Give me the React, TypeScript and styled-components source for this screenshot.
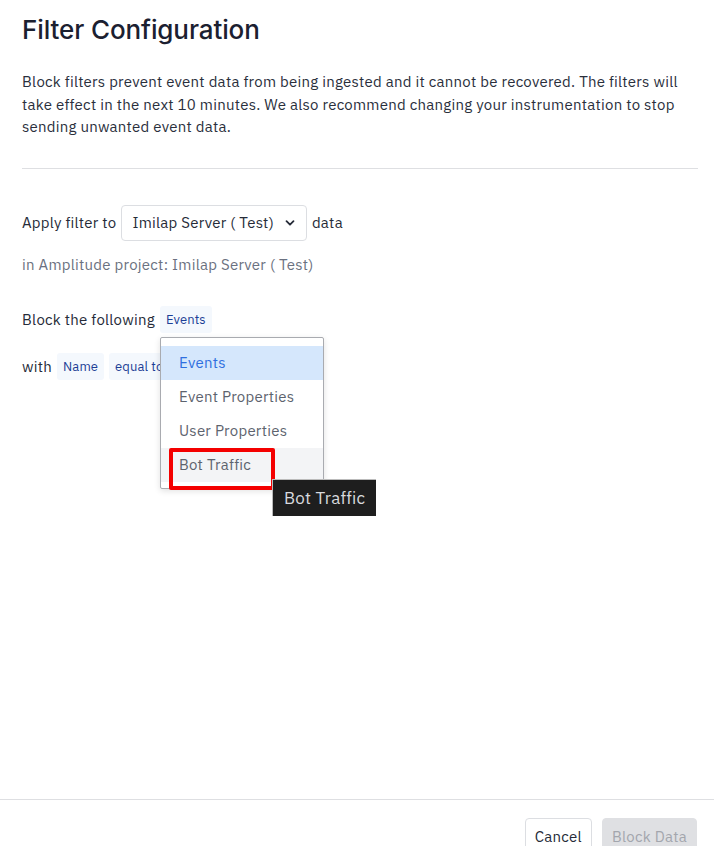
import React from "react";
import styled, { createGlobalStyle } from "styled-components";

const Global = createGlobalStyle`
  html, body { margin: 0; padding: 0; background: #fff; }
  body { font-family: "IBM Plex Sans", "Noto Sans", "Open Sans", sans-serif; color: #262b38; letter-spacing: 0.25px; }
  * { box-sizing: border-box; }
`;

const Page = styled.div`
  width: 714px;
  height: 846px;
  display: flex;
  flex-direction: column;
  overflow: hidden;
`;

const Content = styled.div`
  flex: 1;
  padding: 14px 16px 0 22px;
  display: flex;
  flex-direction: column;
`;

const Title = styled.h1`
  margin: 0;
  font-family: "Inter", "Noto Sans", sans-serif;
  font-weight: 500;
  font-size: 26px;
  line-height: 32px;
  color: #1b2030;
  letter-spacing: -0.1px;
`;

const Intro = styled.p`
  margin: 25px 0 0;
  font-size: 15px;
  line-height: 22.5px;
  color: #2a2f3c;
  padding-right: 8px;
`;

const Divider = styled.hr`
  margin: 29px 0 0;
  border: 0;
  border-top: 1px solid #dedfe2;
  height: 0;
`;

const Row = styled.div<{ $mt: number }>`
  margin-top: ${(p) => p.$mt}px;
  display: flex;
  align-items: center;
  gap: 5px;
  font-size: 15px;
  color: #262b38;
  position: relative;
`;

const Select = styled.div`
  display: flex;
  align-items: center;
  gap: 10px;
  height: 36px;
  padding: 0 10px 0 10px;
  border: 1px solid #dcdee2;
  border-radius: 4px;
  font-size: 15px;
  color: #262b38;
`;

const Muted = styled.div`
  margin-top: 13px;
  font-size: 15px;
  line-height: 22px;
  color: #6b7180;
`;

const Pill = styled.span`
  display: inline-flex;
  align-items: center;
  height: 27px;
  padding: 0 6px;
  border-radius: 3px;
  background: #f4f8fd;
  color: #1c3f96;
  font-size: 13px;
  letter-spacing: 0.1px;
`;

const PillAnchor = styled.span`
  position: relative;
  display: inline-flex;
`;

const Menu = styled.div`
  position: absolute;
  left: 0;
  top: 31px;
  width: 164px;
  padding: 8px 0 6px;
  background: #fff;
  border: 1px solid #a9abb0;
  border-radius: 2px;
  box-shadow: 0 2px 6px rgba(0, 0, 0, 0.12);
  z-index: 5;
`;

const Item = styled.div<{ $active?: boolean; $hover?: boolean }>`
  height: 34px;
  display: flex;
  align-items: center;
  padding-left: 18px;
  font-size: 15px;
  white-space: nowrap;
  color: ${(p) => (p.$active ? "#2f6fdf" : "#5d636e")};
  background: ${(p) => (p.$active ? "#d5e7fc" : p.$hover ? "#f3f4f6" : "transparent")};
`;

const Highlight = styled.div`
  position: absolute;
  left: 8px;
  top: 110px;
  width: 106px;
  height: 42px;
  border: 4px solid #f40000;
  border-radius: 2px;
`;

const Tooltip = styled.div`
  position: absolute;
  left: 111px;
  top: 141px;
  height: 37px;
  padding: 0 11px;
  display: flex;
  align-items: center;
  background: #1e1e1e;
  color: #d8dade;
  font-size: 17px;
  white-space: nowrap;
  border-top: 1px solid #bbb;
  border-left: 1px solid #bbb;
`;

const Footer = styled.div`
  border-top: 1px solid #dedfe2;
  padding: 18px 17px 0 0;
  height: 47px;
  display: flex;
  justify-content: flex-end;
  gap: 10px;
`;

const Button = styled.button<{ $disabled?: boolean }>`
  height: 36px;
  padding: 0 9px;
  border-radius: 4px;
  font-family: inherit;
  font-size: 15px;
  letter-spacing: 0.25px;
  border: 1px solid ${(p) => (p.$disabled ? "#dfe0e3" : "#dcdee2")};
  background: ${(p) => (p.$disabled ? "#dfe0e3" : "#fff")};
  color: ${(p) => (p.$disabled ? "#a3a6ad" : "#262b38")};
  display: flex;
  align-items: center;
  justify-content: center;
`;

const Chevron = () => (
  <svg width="12" height="12" viewBox="0 0 12 12" fill="none">
    <path d="M2.5 4.2 6 7.7 9.5 4.2" stroke="#262b38" strokeWidth="1.8" strokeLinecap="round" strokeLinejoin="round" />
  </svg>
);

export default function App() {
  return (
    <Page>
      <Global />
      <Content>
        <Title>Filter Configuration</Title>
        <Intro>
          Block filters prevent event data from being ingested and it cannot be recovered. The filters will take effect
          in the next 10 minutes. We also recommend changing your instrumentation to stop sending unwanted event data.
        </Intro>
        <Divider />
        <Row $mt={36}>
          <span>Apply filter to</span>
          <Select>
            <span>Imilap Server ( Test)</span>
            <Chevron />
          </Select>
          <span>data</span>
        </Row>
        <Muted>in Amplitude project: Imilap Server ( Test)</Muted>
        <Row $mt={30}>
          <span>Block the following</span>
          <PillAnchor>
            <Pill>Events</Pill>
            <Menu>
              <Item $active>Events</Item>
              <Item>Event Properties</Item>
              <Item>User Properties</Item>
              <Item $hover>Bot Traffic</Item>
              <Highlight />
              <Tooltip>Bot Traffic</Tooltip>
            </Menu>
          </PillAnchor>
        </Row>
        <Row $mt={20}>
          <span>with</span>
          <Pill>Name</Pill>
          <Pill>equal to</Pill>
        </Row>
      </Content>
      <Footer>
        <Button>Cancel</Button>
        <Button $disabled>Block Data</Button>
      </Footer>
    </Page>
  );
}
